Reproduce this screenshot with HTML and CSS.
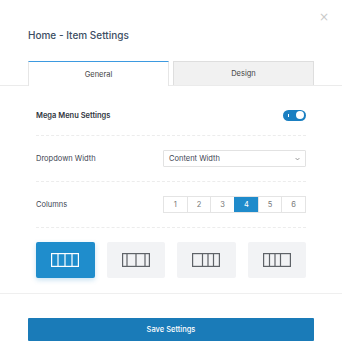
FILE: index.html
```html
<!DOCTYPE html>
<html lang="en">
<head>
    <meta charset="UTF-8">
    <title>Home - Item Settings</title>
    <link rel="stylesheet" href="styles.css">
</head>
<body>
    <div class="modal">
        <button class="close-button">&times;</button>

        <div class="modal-header">
            <div class="modal-title">Home - Item Settings</div>
        </div>

        <div class="tab-bar">
            <div class="tab active">General</div>
            <div class="tab">Design</div>
        </div>

        <div class="panel">
            <div class="row">
                <div class="row-label strong">Mega Menu Settings</div>
                <div class="toggle on"><span class="toggle-tick"></span><span class="toggle-knob"></span></div>
            </div>
            <div class="row">
                <div class="row-label">Dropdown Width</div>
                <div class="select">
                    <span>Content Width</span>
                    <svg class="chevron" viewBox="0 0 8 5" width="5" height="4"><path d="M1 1l3 3 3-3" fill="none" stroke="#777" stroke-width="1.2"/></svg>
                </div>
            </div>
            <div class="row">
                <div class="row-label">Columns</div>
                <div class="button-group">
                    <div class="group-item">1</div>
                    <div class="group-item">2</div>
                    <div class="group-item">3</div>
                    <div class="group-item active">4</div>
                    <div class="group-item">5</div>
                    <div class="group-item">6</div>
                </div>
            </div>

            <div class="layouts">
                <div class="layout active">
                    <svg viewBox="0 0 28 14" width="28" height="14"><rect x="0.6" y="0.6" width="26.8" height="12.8"/><path d="M7 1v12M14 1v12M21 1v12"/></svg>
                </div>
                <div class="layout">
                    <svg viewBox="0 0 28 14" width="28" height="14"><rect x="0.6" y="0.6" width="26.8" height="12.8"/><path d="M5 1v12M14 1v12M23 1v12"/></svg>
                </div>
                <div class="layout">
                    <svg viewBox="0 0 28 14" width="28" height="14"><rect x="0.6" y="0.6" width="26.8" height="12.8"/><path d="M10.5 1v12M16 1v12M21.5 1v12"/></svg>
                </div>
                <div class="layout">
                    <svg viewBox="0 0 28 14" width="28" height="14"><rect x="0.6" y="0.6" width="26.8" height="12.8"/><path d="M6.5 1v12M12 1v12M17.5 1v12"/></svg>
                </div>
            </div>
        </div>

        <div class="modal-footer">
            <button class="save-button">Save Settings</button>
        </div>
    </div>
</body>
</html>
```

FILE: styles.css
```css
body {
    margin: 0;
    background: #fff;
    font-family: Inter, "Liberation Sans", sans-serif;
}
.modal {
    width: 342px;
    height: 360px;
    position: relative;
    background: #fff;
    overflow: hidden;
}
.close-button {
    position: absolute;
    top: 11px;
    right: 13px;
    border: none;
    background: none;
    padding: 0;
    color: #c9c9c9;
    font-size: 12px;
    line-height: 12px;
    font-family: "DejaVu Sans", sans-serif;
    cursor: pointer;
}
.modal-header {
    padding: 28px 28px 0;
}
.modal-title {
    color: #3c4e63;
    font-size: 10px;
    font-weight: 500;
    line-height: 14px;
}

/* вкладки */
.tab-bar {
    margin-top: 19px;
    padding: 0 28px;
    display: flex;
    gap: 4px;
    border-bottom: 1px solid #ebebeb;
}
.tab {
    flex: 1;
    height: 24px;
    display: flex;
    justify-content: center;
    align-items: center;
    box-sizing: border-box;
    background: #f1f1f1;
    border: 1px solid #dedede;
    border-bottom: none;
    color: #444;
    font-size: 7.5px;
}
.tab.active {
    background: #fff;
    border-left-color: #e6e6e6;
    border-right-color: #e6e6e6;
    border-top: 1px solid #3d9ae0;
    height: 25px;
    margin-bottom: -1px;
}

.panel {
    padding: 9px 36px 15px;
}
.row {
    display: flex;
    align-items: center;
    height: 45px;
    border-bottom: 1px dashed #ececec;
}
.row:first-child {
    height: 40px;
}
.row-label {
    flex: 1;
    color: #3d4552;
    font-size: 7.5px;
}
.row-label.strong {
    color: #2f3540;
    font-weight: 600;
}

.toggle {
    width: 23px;
    height: 11px;
    border-radius: 6px;
    background: #1a7fc1;
    position: relative;
}
.toggle-tick {
    position: absolute;
    left: 4.5px;
    top: 4px;
    width: 1px;
    height: 3px;
    background: #fff;
}
.toggle-knob {
    position: absolute;
    right: 2px;
    top: 1.5px;
    width: 8px;
    height: 8px;
    border-radius: 50%;
    background: #fff;
}

.select {
    width: 143px;
    height: 17px;
    box-sizing: border-box;
    border: 1px solid #e2e2e2;
    border-radius: 1px;
    padding: 0 5px;
    display: flex;
    align-items: center;
    justify-content: space-between;
    color: #3d4552;
    font-size: 7.5px;
}

.button-group {
    width: 143px;
    height: 17px;
    display: flex;
    box-sizing: border-box;
    border: 1px solid #e4e4e4;
}
.group-item {
    flex: 1;
    display: flex;
    justify-content: center;
    align-items: center;
    border-left: 1px solid #e4e4e4;
    color: #777;
    font-size: 7.5px;
}
.group-item:first-child {
    border-left: none;
}
.group-item.active {
    background: #1f8bcb;
    color: #fff;
    border-left-color: #1f8bcb;
}

.layouts {
    margin-top: 14px;
    display: grid;
    grid-template-columns: repeat(4, 1fr);
    gap: 12px;
}
.layout {
    height: 36px;
    display: flex;
    justify-content: center;
    align-items: center;
    background: #f2f3f5;
    border-radius: 2px;
}
.layout svg {
    fill: none;
    stroke: #5f6368;
    stroke-width: 1.2;
}
.layout.active {
    background: #1f8dcc;
    box-shadow: 0 2px 5px rgba(31, 141, 204, 0.25);
}
.layout.active svg {
    stroke: #fff;
}

.modal-footer {
    border-top: 1px solid #efefef;
    padding: 22px 28px 0;
}
.save-button {
    width: 100%;
    height: 23px;
    border: none;
    border-radius: 1px;
    background: #1a7bb8;
    color: #fff;
    font-family: Inter, "Liberation Sans", sans-serif;
    font-size: 7.5px;
    font-weight: 500;
    cursor: pointer;
}
```
